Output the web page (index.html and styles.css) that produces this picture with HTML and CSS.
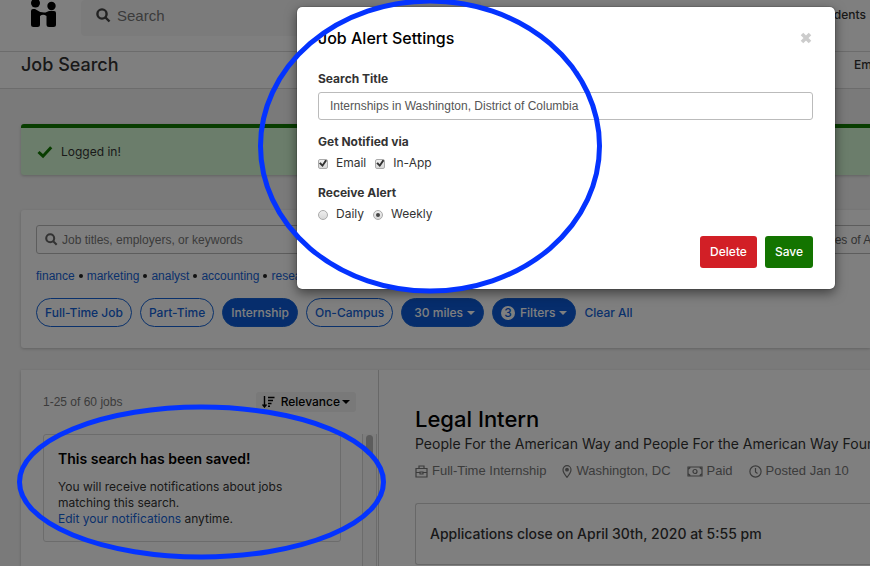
FILE: index.html
```
<!DOCTYPE html>
<html lang="en">
<head>
    <meta charset="UTF-8">
    <meta name="viewport" content="width=device-width, initial-scale=1.0">
    <title>Job Search</title>
    <link rel="stylesheet" href="styles.css">
</head>
<body>
    <header class="topbar">
        <a href="#" class="logo" aria-label="Home">
            <svg width="25" height="28" viewBox="0 0 25 28">
                <circle cx="4.500" cy="3" r="4.500"/>
                <circle cx="20.500" cy="6" r="4.200"/>
                <path d="M0 11Q0 9 2 9H4Q8.500 12.500 13 12.500H14.500L18 11H23Q25 11 25 13V24.500Q25 27 22.500 27H18Q15.500 27 15.500 24.500V16Q12 13.500 9 16V24.500Q9 27 6.500 27H2.500Q0 27 0 24.500Z"/>
            </svg>
        </a>
        <label class="site-search">
            <svg class="search-icon" width="15" height="15" viewBox="0 0 15 15"><circle cx="6" cy="6" r="4.600"/><path d="M9.500 9.500L13.500 13.500"/></svg>
            <input type="text" placeholder="Search" aria-label="Search">
        </label>
        <a href="#" class="nav-link">Students</a>
    </header>

    <div class="titlebar">
        <h1>Job Search</h1>
        <a href="#" class="nav-link">Employers</a>
    </div>

    <main>
        <div class="alert">
            <svg width="16" height="14" viewBox="0 0 16 14"><path d="M1.500 7L6 11.200L14.200 2.200"/></svg>
            <span>Logged in!</span>
        </div>

        <section class="filters">
            <div class="search-row">
                <label class="keywords">
                    <svg class="search-icon" width="13" height="13" viewBox="0 0 15 15"><circle cx="6" cy="6" r="4.600"/><path d="M9.500 9.500L13.500 13.500"/></svg>
                    <input type="text" placeholder="Job titles, employers, or keywords" aria-label="Keywords">
                </label>
                <input class="location" type="text" value="Within 30 miles of Arlington" aria-label="Location">
            </div>
            <div class="suggestions">
                <a href="#">finance</a><i class="dot"></i><a href="#">marketing</a><i class="dot"></i><a href="#">analyst</a><i class="dot"></i><a href="#">accounting</a><i class="dot"></i><a href="#">research</a>
            </div>
            <div class="pills">
                <button class="pill">Full-Time Job</button>
                <button class="pill">Part-Time</button>
                <button class="pill active">Internship</button>
                <button class="pill">On-Campus</button>
                <button class="pill active distance">30 miles<i class="caret"></i></button>
                <button class="pill active"><span class="count">3</span>Filters<i class="caret"></i></button>
                <a href="#" class="clear">Clear All</a>
            </div>
        </section>

        <section class="results">
            <div class="list">
                <div class="list-head">
                    <span>1-25 of 60 jobs</span>
                    <button class="sort">
                        <svg width="13" height="12" viewBox="0 0 13 12"><path d="M2.500 0V10M0.500 8.500L2.500 11L4.500 8.500M6 1.500H12.500M6 4.500H11M6 7.500H9.500M6 10.300H8"/></svg>
                        <span>Relevance</span><i class="caret"></i>
                    </button>
                </div>
                <div class="list-body">
                    <div class="saved">
                        <h2>This search has been saved!</h2>
                        <p>You will receive notifications about jobs matching this search.</p>
                        <p><a href="#">Edit your notifications</a> anytime.</p>
                    </div>
                    <div class="track"><div class="thumb"></div></div>
                </div>
            </div>

            <article class="job">
                <h2>Legal Intern</h2>
                <p class="employer">People For the American Way and People For the American Way Foundation</p>
                <ul class="meta">
                    <li>
                        <svg width="13" height="13" viewBox="0 0 13 13"><path d="M1 3.500H12V12H1ZM4 3.500V1H9V3.500M1 7.500H5M8 7.500H12M5 7V9H8V7Z"/></svg>
                        Full-Time Internship
                    </li>
                    <li>
                        <svg width="10" height="13" viewBox="0 0 10 13"><path d="M5 12.300Q1 7.500 1 4.700A4 4 0 0 1 9 4.700Q9 7.500 5 12.300Z"/><circle cx="5" cy="4.700" r="1.300" fill="#777"/></svg>
                        Washington, DC
                    </li>
                    <li>
                        <svg width="16" height="11" viewBox="0 0 16 11"><path d="M1 1H15V10H1ZM1.500 3.200L3.200 1.500M12.800 1.500L14.500 3.200M1.500 7.800L3.200 9.500M12.800 9.500L14.500 7.800"/><circle cx="8" cy="5.500" r="2"/></svg>
                        Paid
                    </li>
                    <li>
                        <svg width="13" height="13" viewBox="0 0 13 13"><circle cx="6.500" cy="6.500" r="5.600"/><path d="M6.500 3V7L8.500 8.500"/></svg>
                        Posted Jan 10
                    </li>
                </ul>
                <div class="deadline">Applications close on April 30th, 2020 at 5:55 pm</div>
            </article>
        </section>
    </main>

    <div class="backdrop">
        <form class="modal">
            <div class="modal-head">
                <h2>Job Alert Settings</h2>
                <button type="button" class="close" aria-label="Close">
                    <svg width="12" height="12" viewBox="0 0 12 12"><path d="M2 2L10 10M10 2L2 10"/></svg>
                </button>
            </div>
            <label class="field-label" for="search-title">Search Title</label>
            <input id="search-title" class="text-input" type="text" value="Internships in Washington, District of Columbia">
            <fieldset>
                <legend class="field-label">Get Notified via</legend>
                <label><input type="checkbox" checked>Email</label>
                <label><input type="checkbox" checked>In-App</label>
            </fieldset>
            <fieldset>
                <legend class="field-label">Receive Alert</legend>
                <label><input type="radio" name="freq">Daily</label>
                <label><input type="radio" name="freq" checked>Weekly</label>
            </fieldset>
            <div class="actions">
                <button type="button" class="btn delete">Delete</button>
                <button type="button" class="btn save">Save</button>
            </div>
        </form>
    </div>

    <!-- hand-drawn style markers -->
    <svg class="marks" width="870" height="566" viewBox="0 0 870 566">
        <ellipse cx="430" cy="146" rx="169.500" ry="145"/>
        <ellipse cx="201.500" cy="482" rx="182" ry="75"/>
    </svg>
</body>
</html>
```
FILE: styles.css
```
* {
    box-sizing: border-box;
}

body {
    margin: 0;
    height: 100vh;
    overflow: hidden;
    position: relative;
    display: flex;
    flex-direction: column;
    font-family: Inter, "Liberation Sans", sans-serif;
    font-size: 12px;
    line-height: 16px;
    color: #333;
    background: #f4f4f4;
}

h1, h2, p, ul, fieldset, legend {
    margin: 0;
    padding: 0;
}

input, button {
    font: inherit;
    color: inherit;
}

input[type="text"] {
    font-family: "Liberation Sans", Arial, sans-serif;
}

button {
    cursor: pointer;
    border: none;
    white-space: nowrap;
}

a {
    color: #1463d8;
    text-decoration: none;
}

svg {
    flex: none;
    fill: none;
}

input::placeholder {
    color: #777;
    opacity: 1;
}

.topbar {
    display: flex;
    justify-content: space-between;
    background: #fff;
    border-bottom: 1px solid #d8d8d8;
    padding: 0 4px 15px 31px;
}

.logo svg {
    display: block;
    fill: #000;
}

.site-search {
    display: flex;
    align-items: center;
    gap: 6px;
    flex: 1;
    max-width: 400px;
    height: 36px;
    margin: 0 auto 0 25px;
    padding: 0 15px 5px;
    background: #f6f6f6;
    border-radius: 4px;
}

.site-search input {
    border: none;
    background: none;
    padding: 0;
    font-size: 15px;
}

.search-icon {
    stroke: #444;
    stroke-width: 2.4;
}

.nav-link {
    color: #333;
    font-weight: 500;
    line-height: 30px;
}

.titlebar {
    display: flex;
    justify-content: space-between;
    height: 37px;
    flex: none;
    padding: 0 0 0 21px;
    background: #fff;
    border-bottom: 1px solid #d8d8d8;
}

.titlebar h1 {
    font-size: 18px;
    line-height: 26px;
    font-weight: 500;
}

.titlebar .nav-link {
    line-height: 26px;
    width: 16px;
    overflow: hidden;
}

main {
    flex: 1;
    display: flex;
    flex-direction: column;
    padding: 35px 0 0 21px;
    min-height: 0;
}

.alert {
    display: flex;
    align-items: center;
    gap: 8px;
    flex: none;
    height: 51px;
    padding: 0 16px;
    background: #d6fad6;
    border-top: 4px solid #107a00;
    border-radius: 3px 0 0 3px;
    box-shadow: 0 1px 3px rgba(0, 0, 0, 0.2);
}

.alert svg {
    stroke: #107a00;
    stroke-width: 3;
}

.filters {
    margin-top: 35px;
    padding: 15px 0 21px 15px;
    background: #fff;
    border-radius: 3px 0 0 3px;
    box-shadow: 0 1px 3px rgba(0, 0, 0, 0.2);
}

.search-row {
    display: flex;
}

.keywords {
    display: flex;
    align-items: center;
    gap: 4px;
    flex: 1;
    height: 29px;
    padding: 0 8px;
    border: 1px solid #bbb;
    border-radius: 3px 0 0 3px;
}

.keywords input {
    flex: 1;
    border: none;
    padding: 0;
}

.keywords .search-icon {
    stroke: #666;
}

.location {
    width: 112px;
    padding: 0 0 0 8px;
    border: 1px solid #bbb;
    border-width: 1px 0;
    color: #666;
}

.suggestions {
    display: flex;
    align-items: center;
    gap: 4px;
    margin-top: 14px;
    font-family: "Liberation Sans", Arial, sans-serif;
}

.dot {
    width: 4px;
    height: 4px;
    border-radius: 50%;
    background: #222;
}

.pills {
    display: flex;
    align-items: center;
    gap: 8px;
    margin-top: 14px;
}

.pill {
    display: flex;
    align-items: center;
    height: 29px;
    padding: 0 8px;
    border: 1px solid #1463d8;
    border-radius: 15px;
    background: #fff;
    color: #1463d8;
    font-weight: 500;
}

.pill.active {
    background: #0c5bd8;
    color: #fff;
}

.pill.distance {
    padding-left: 12px;
}

.count {
    width: 14px;
    height: 14px;
    line-height: 14px;
    margin-right: 5px;
    border-radius: 50%;
    background: #fff;
    color: #0c5bd8;
    text-align: center;
}

.caret {
    margin-left: 4px;
    border: 4px solid transparent;
    border-top-color: currentColor;
    border-bottom: none;
}

.clear {
    font-weight: 500;
}

.results {
    flex: 1;
    display: flex;
    min-height: 0;
    margin-top: 22px;
    background: #fff;
    box-shadow: 0 1px 3px rgba(0, 0, 0, 0.2);
}

.list {
    width: 358px;
    flex: none;
    display: flex;
    flex-direction: column;
    padding-left: 22px;
    border-right: 1px solid #d0d0d0;
}

.list-head {
    display: flex;
    justify-content: space-between;
    align-items: center;
    padding: 22px 22px 22px 0;
    color: #777;
}

.list-head > span {
    font-family: "Liberation Sans", Arial, sans-serif;
}

.sort {
    display: flex;
    align-items: center;
    height: 20px;
    padding: 0 6px;
    gap: 6px;
    border-radius: 3px;
    background: #f2f2f2;
    color: #000;
    font-weight: 500;
}

.sort svg {
    stroke: #000;
    stroke-width: 1.4;
}

.sort .caret {
    margin-left: -4px;
}

.list-body {
    flex: 1;
    display: flex;
    align-items: flex-start;
    justify-content: space-between;
    min-height: 0;
    padding-right: 1px;
}

.saved {
    width: 298px;
    padding: 16px 14px 14px;
    border: 1px solid #d8d8d8;
    border-radius: 3px;
}

.saved h2 {
    margin-bottom: 12px;
    font-size: 14px;
    line-height: 16px;
    font-weight: 600;
    color: #000;
}

.track {
    width: 15px;
    height: 100%;
    padding: 1px 3px;
    border: 1px solid #d8d8d8;
    border-width: 0 1px;
    background: #fafafa;
}

.thumb {
    height: 20px;
    border-radius: 4px;
    background: #b8b8b8;
}

.job {
    flex: 1;
    min-width: 0;
    padding: 35px 0 0 36px;
    white-space: nowrap;
}

.job h2 {
    font-size: 22px;
    line-height: 28px;
    font-weight: 500;
    color: #000;
}

.employer {
    font-size: 14px;
    line-height: 20px;
    margin-top: 1px;
    overflow: hidden;
}

.meta {
    display: flex;
    gap: 16px;
    margin-top: 9px;
    list-style: none;
    font-family: "Liberation Sans", Arial, sans-serif;
    font-size: 13px;
    color: #777;
}

.meta li {
    display: flex;
    align-items: center;
    gap: 4px;
}

.meta svg {
    stroke: #777;
    stroke-width: 1.2;
}

.deadline {
    margin-top: 24px;
    padding: 20px 14px;
    border: 1px solid #d0d0d0;
    border-right: none;
    border-radius: 3px 0 0 3px;
    font-size: 14px;
    line-height: 20px;
    font-weight: 500;
}

.backdrop {
    position: absolute;
    inset: 0;
    display: flex;
    justify-content: flex-end;
    align-items: flex-start;
    padding: 7px 35px;
    background: rgba(0, 0, 0, 0.5);
}

.modal {
    width: 538px;
    padding: 21px 22px 21px 21px;
    background: #fff;
    border-radius: 5px;
    box-shadow: 0 4px 12px rgba(0, 0, 0, 0.5), 0 0 1px #000;
}

.modal-head {
    display: flex;
    justify-content: space-between;
    align-items: center;
    margin-bottom: 23px;
}

.modal-head h2 {
    font-size: 16px;
    line-height: 20px;
    font-weight: 500;
    color: #000;
}

.close {
    display: flex;
    padding: 0 1px;
    background: none;
}

.close svg {
    stroke: #ccc;
    stroke-width: 3.6;
}

.field-label {
    display: block;
    font-weight: 700;
    line-height: 16px;
}

.text-input {
    width: 100%;
    height: 28px;
    margin-top: 5px;
    padding: 0 11px;
    border: 1px solid #bbb;
    border-radius: 3px;
    color: #555;
}

fieldset {
    display: flex;
    gap: 9px;
    margin-top: 14px;
    border: none;
}

fieldset label {
    display: flex;
    align-items: center;
    margin-top: 5px;
}

fieldset input {
    appearance: none;
    display: grid;
    place-items: center;
    width: 10px;
    height: 10px;
    margin: 1px 8px 0 0;
    border: 1px solid #aaa;
    border-radius: 2px;
    background: linear-gradient(#eee, #d8d8d8);
}

input[type="radio"] {
    border-radius: 50%;
}

input[type="checkbox"]:checked::before {
    content: "";
    width: 8px;
    height: 8px;
    background: #333;
    clip-path: polygon(0 50%, 20% 35%, 42% 58%, 80% 0, 100% 15%, 45% 95%);
}

input[type="radio"]:checked::before {
    content: "";
    width: 4px;
    height: 4px;
    border-radius: 50%;
    background: #444;
}

.actions {
    display: flex;
    justify-content: flex-end;
    gap: 8px;
    margin-top: 14px;
}

.btn {
    height: 32px;
    padding: 0 10px;
    border-radius: 3px;
    color: #fff;
    font-weight: 500;
}

.delete {
    background: #d21f26;
}

.save {
    background: #137400;
}

.marks {
    position: absolute;
    top: 0;
    left: 0;
    stroke: #0433ff;
    stroke-width: 5;
    pointer-events: none;
}
```
